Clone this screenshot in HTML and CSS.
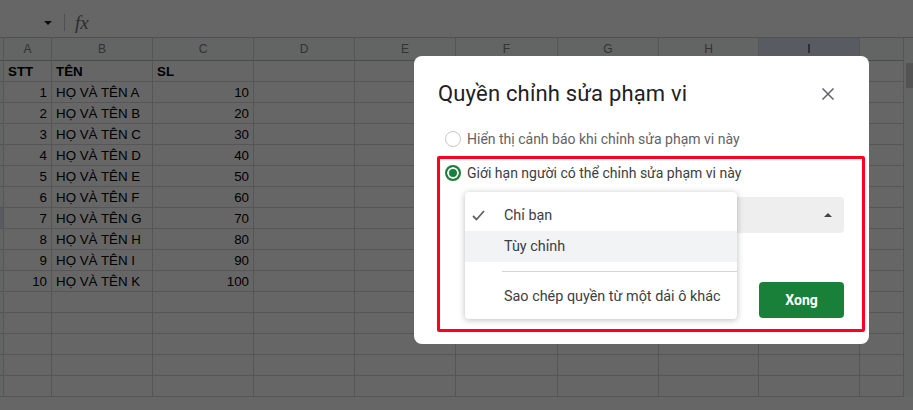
FILE: index.html
```html
<!DOCTYPE html>
<html lang="vi">
<head>
<title>Quyền chỉnh sửa phạm vi</title>
<link rel="stylesheet" href="styles.css">
</head>
<body>
<div class="toolbar">
  <span class="namecaret"></span>
  <span class="toolsep"></span>
  <span class="fx">fx</span>
</div>

<div class="sheet">
  <table class="grid">
    <colgroup>
      <col class="c0"><col class="ca"><col class="cb"><col class="cb"><col class="cb"><col class="cb"><col class="cb2"><col class="cb"><col class="cb3"><col class="cb"><col class="cj">
    </colgroup>
    <tr class="head"><th></th><th>A</th><th>B</th><th>C</th><th>D</th><th>E</th><th>F</th><th>G</th><th>H</th><th class="selected">I</th><th></th></tr>
    <tr class="bold"><th></th><td>STT</td><td>TÊN</td><td>SL</td><td></td><td></td><td></td><td></td><td></td><td></td><td></td></tr>
    <tr><th></th><td class="num">1</td><td>HỌ VÀ TÊN A</td><td class="num">10</td><td></td><td></td><td></td><td></td><td></td><td></td><td></td></tr>
    <tr><th></th><td class="num">2</td><td>HỌ VÀ TÊN B</td><td class="num">20</td><td></td><td></td><td></td><td></td><td></td><td></td><td></td></tr>
    <tr><th></th><td class="num">3</td><td>HỌ VÀ TÊN C</td><td class="num">30</td><td></td><td></td><td></td><td></td><td></td><td></td><td></td></tr>
    <tr><th></th><td class="num">4</td><td>HỌ VÀ TÊN D</td><td class="num">40</td><td></td><td></td><td></td><td></td><td></td><td></td><td></td></tr>
    <tr><th></th><td class="num">5</td><td>HỌ VÀ TÊN E</td><td class="num">50</td><td></td><td></td><td></td><td></td><td></td><td></td><td></td></tr>
    <tr><th></th><td class="num">6</td><td>HỌ VÀ TÊN F</td><td class="num">60</td><td></td><td></td><td></td><td></td><td></td><td></td><td></td></tr>
    <tr><th class="selected"></th><td class="num">7</td><td>HỌ VÀ TÊN G</td><td class="num">70</td><td></td><td></td><td></td><td></td><td></td><td></td><td></td></tr>
    <tr><th></th><td class="num">8</td><td>HỌ VÀ TÊN H</td><td class="num">80</td><td></td><td></td><td></td><td></td><td></td><td></td><td></td></tr>
    <tr><th></th><td class="num">9</td><td>HỌ VÀ TÊN I</td><td class="num">90</td><td></td><td></td><td></td><td></td><td></td><td></td><td></td></tr>
    <tr><th></th><td class="num">10</td><td>HỌ VÀ TÊN K</td><td class="num">100</td><td></td><td></td><td></td><td></td><td></td><td></td><td></td></tr>
    <tr><th></th><td></td><td></td><td></td><td></td><td></td><td></td><td></td><td></td><td></td><td></td></tr>
    <tr><th></th><td></td><td></td><td></td><td></td><td></td><td></td><td></td><td></td><td></td><td></td></tr>
    <tr><th></th><td></td><td></td><td></td><td></td><td></td><td></td><td></td><td></td><td></td><td></td></tr>
    <tr><th></th><td></td><td></td><td></td><td></td><td></td><td></td><td></td><td></td><td></td><td></td></tr>
    <tr><th></th><td></td><td></td><td></td><td></td><td></td><td></td><td></td><td></td><td></td><td></td></tr>
  </table>
  <div class="scrollbar"><div class="thumb"></div></div>
</div>

<div class="backdrop"></div>

<div class="dialog">
  <div class="dialoghead">
    <div class="title">Quyền chỉnh sửa phạm vi</div>
    <svg class="close" width="12" height="12" viewBox="0 0 12 12"><path d="M0.5 0.5L11.5 11.5M11.5 0.5L0.5 11.5" stroke="#5f6368" stroke-width="1.5" fill="none"/></svg>
  </div>

  <div class="option first"><span class="radio"></span>Hiển thị cảnh báo khi chỉnh sửa phạm vi này</div>
  <div class="option second"><span class="radio checked"></span>Giới hạn người có thể chỉnh sửa phạm vi này</div>

  <div class="select"><span class="caretup"></span></div>

  <div class="footer"><button class="done" type="button">Xong</button></div>

  <div class="menu">
    <div class="menuitem">
      <svg class="check" width="13" height="11" viewBox="0 0 13 11"><path d="M1 6L4.500 9.500L12 1" stroke="#5f6368" stroke-width="1.800" fill="none"/></svg>
      Chỉ bạn
    </div>
    <div class="menuitem hover">Tùy chỉnh</div>
    <div class="menusep"></div>
    <div class="menuitem">Sao chép quyền từ một dải ô khác</div>
  </div>

  <div class="redbox"></div>
</div>
</body>
</html>
```

FILE: styles.css
```css
html, body {
  margin: 0;
  padding: 0;
}
body {
  width: 913px;
  height: 410px;
  overflow: hidden;
  position: relative;
  background-color: white;
  font-family: "Liberation Sans", Arial, sans-serif;
}

.toolbar {
  height: 29px;
  display: flex;
  align-items: center;
  padding: 8px 0 0 44px;
  border-bottom: 1px solid #c8c8c8;
}
.namecaret {
  width: 0;
  height: 0;
  border-left: 4px solid transparent;
  border-right: 4px solid transparent;
  border-top: 4px solid #222;
}
.toolsep {
  width: 1px;
  height: 17px;
  background-color: #c8c8c8;
  margin-left: 12px;
}
.fx {
  margin-left: 10px;
  font-family: "Liberation Serif", serif;
  font-style: italic;
  font-size: 19px;
  color: #707070;
}

.sheet {
  display: flex;
}
.grid {
  table-layout: fixed;
  width: 904px;
  border-collapse: separate;
  border-spacing: 0;
  flex: none;
}
.c0 { width: 4px; }
.ca { width: 48px; }
.cb { width: 101px; }
.cb2 { width: 102px; }
.cb3 { width: 100px; }
.cj { width: 44px; }

.grid tr { height: 21px; }
.grid .head { height: 23px; }
.grid th, .grid td {
  padding: 0;
  border-right: 1px solid #d8d8d8;
  border-bottom: 1px solid #d8d8d8;
  box-sizing: border-box;
  overflow: hidden;
  white-space: nowrap;
}
.grid th {
  background-color: #f8f9fa;
  font-weight: normal;
  font-size: 12px;
  color: #808080;
  text-align: center;
}
.grid .head th {
  border-bottom-color: #bbb;
}
.grid th.selected {
  background-color: #dde4f2;
  color: #1a2a50;
}
.grid td {
  font-size: 13.33px;
  color: #000;
  padding: 1px 4px 0 4px;
  height: 21px;
}
.grid .num { text-align: right; }
.grid .bold td { font-weight: bold; }

.scrollbar {
  width: 9px;
  background-color: #f8f9fa;
}
.thumb {
  height: 25px;
  margin: 25px 0 0 2px;
  background-color: #cfcfcf;
}

.backdrop {
  position: absolute;
  top: 0;
  left: 0;
  width: 913px;
  height: 410px;
  background-color: rgba(0, 0, 0, 0.6);
}

.dialog {
  position: absolute;
  left: 414px;
  top: 56px;
  width: 455px;
  height: 288px;
  box-sizing: border-box;
  padding: 24px 25px 26px 24px;
  background-color: white;
  border-radius: 8px;
  display: flex;
  flex-direction: column;
  font-family: Roboto, sans-serif;
}
.dialoghead {
  height: 28px;
  display: flex;
  align-items: center;
  justify-content: space-between;
}
.title {
  font-size: 22px;
  letter-spacing: 0.18px;
  color: #202124;
  line-height: 30px;
}
.close {
  margin-right: 10px;
}

.option {
  height: 24px;
  display: flex;
  align-items: center;
  margin-left: 7px;
  font-size: 14px;
}
.option.first {
  margin-top: 19px;
  color: #5f6368;
}
.option.second {
  margin-top: 10px;
  color: #3c4043;
}
.radio {
  width: 16px;
  height: 16px;
  box-sizing: border-box;
  border: 1.5px solid #c8c8c8;
  border-radius: 50%;
  margin-right: 6px;
  flex: none;
}
.radio.checked {
  border: 2px solid #188038;
  background-color: #188038;
  box-shadow: inset 0 0 0 2px white;
}

.select {
  height: 36px;
  margin: 12px 0 0 27px;
  background-color: #eeeeee;
  border-radius: 4px;
  display: flex;
  align-items: center;
  justify-content: flex-end;
  padding-right: 12px;
}
.caretup {
  width: 0;
  height: 0;
  border-left: 4px solid transparent;
  border-right: 4px solid transparent;
  border-bottom: 4px solid #444;
}

.footer {
  display: flex;
  justify-content: flex-end;
  margin-top: 49px;
}
.done {
  width: 85px;
  height: 36px;
  border: none;
  border-radius: 4px;
  background-color: #188038;
  color: white;
  font-family: Roboto, sans-serif;
  font-size: 14px;
  font-weight: bold;
}

.menu {
  position: absolute;
  left: 51px;
  top: 136px;
  width: 272px;
  height: 127px;
  box-sizing: border-box;
  padding-top: 8px;
  background-color: white;
  border-radius: 4px;
  box-shadow: 0 1px 6px rgba(60, 64, 67, 0.35);
  font-size: 14.4px;
  color: #3c4043;
}
.menuitem {
  position: relative;
  height: 31px;
  line-height: 31px;
  padding-left: 39px;
}
.menuitem.hover {
  background-color: #f1f3f4;
}
.check {
  position: absolute;
  left: 7px;
  top: 10px;
}
.menusep {
  height: 1px;
  margin: 9px 0 9px 37px;
  background-color: #d4d4d4;
}

.redbox {
  position: absolute;
  left: 23px;
  top: 100px;
  width: 428px;
  height: 176px;
  box-sizing: border-box;
  border: 3px solid #ff0022;
  border-radius: 2px;
}
```
